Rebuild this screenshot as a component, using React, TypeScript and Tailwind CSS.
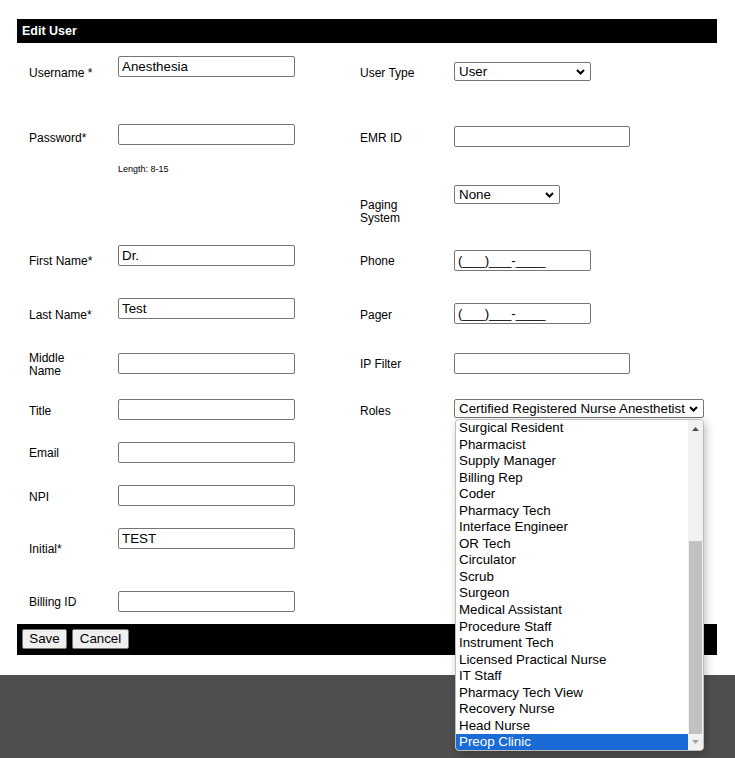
import React from 'react';

const roleOptions = [
  'Surgical Resident',
  'Pharmacist',
  'Supply Manager',
  'Billing Rep',
  'Coder',
  'Pharmacy Tech',
  'Interface Engineer',
  'OR Tech',
  'Circulator',
  'Scrub',
  'Surgeon',
  'Medical Assistant',
  'Procedure Staff',
  'Instrument Tech',
  'Licensed Practical Nurse',
  'IT Staff',
  'Pharmacy Tech View',
  'Recovery Nurse',
  'Head Nurse',
  'Preop Clinic',
];

const Chevron = () => (
  <svg width="9" height="6" viewBox="0 0 9 6" className="shrink-0">
    <path d="M1 1l3.5 3.5L8 1" fill="none" stroke="#000" strokeWidth="2" />
  </svg>
);

const TextInput = ({ value = '', className = 'w-[177px]' }: { value?: string; className?: string }) => (
  <input
    readOnly
    defaultValue={value}
    className={`block h-[21px] rounded-[2px] border border-[#767676] bg-white px-[3px] text-[13.33px] text-black outline-none ${className}`}
  />
);

const SelectBox = ({ value, className }: { value: string; className: string }) => (
  <div
    className={`flex h-[19px] items-center justify-between rounded-[2px] border border-[#767676] bg-white pl-[4px] pr-[5px] text-[13.33px] leading-[17px] text-black ${className}`}
  >
    <span className="whitespace-nowrap">{value}</span>
    <Chevron />
  </div>
);

const RolesDropdown = () => (
  <div className="absolute left-[1px] top-[20px] z-10 flex h-[332px] w-[249px] overflow-hidden rounded-[4px] border border-[#bdbdbd] bg-white shadow-[2px_3px_8px_rgba(0,0,0,0.25)]">
    <div className="flex-1">
      {roleOptions.map((role, i) => (
        <div
          key={role}
          className={`h-[16.55px] whitespace-nowrap pl-[3px] text-[13.33px] leading-[16.55px] ${
            i === roleOptions.length - 1 ? 'bg-[#1a6bd5] text-white' : 'text-black'
          }`}
        >
          {role}
        </div>
      ))}
    </div>
    {/* scrollbar */}
    <div className="flex w-[15px] flex-col bg-[#f1f1f1]">
      <div className="flex h-[17px] items-center justify-center">
        <svg width="7" height="4" viewBox="0 0 7 4">
          <polygon points="0,4 3.5,0 7,4" fill="#505050" />
        </svg>
      </div>
      <div className="flex-1" />
      <div className="mx-[1px] h-[193px] bg-[#c1c1c1]" />
      <div className="flex h-[16px] items-center justify-center">
        <svg width="7" height="4" viewBox="0 0 7 4">
          <polygon points="0,0 7,0 3.5,4" fill="#a3a3a3" />
        </svg>
      </div>
    </div>
  </div>
);

// labels sit a touch lower than the field tops, table-cell style
const Label = ({ children, className }: { children: React.ReactNode; className: string }) => (
  <div className={`mt-[1.5px] text-[12px] leading-[13px] text-black ${className}`}>{children}</div>
);

const rowCols = 'grid grid-cols-[89px_242px_94px_1fr]';

export default function App() {
  return (
    <div className="min-h-[758px] w-full bg-white pt-[19px] font-['Liberation_Sans',Arial,sans-serif]">
      <div className="ml-[17px] w-[700px]">
        {/* Header */}
        <div className="h-[24px] bg-black pl-[5px] text-[12.5px] font-bold leading-[24px] text-white">Edit User</div>

        <div className="pl-[12px]">
          {/* Username / User Type */}
          <div className={`${rowCols} h-[70px]`}>
            <Label className="pt-[22px]">Username *</Label>
            <div className="pt-[13px]"><TextInput value="Anesthesia" /></div>
            <Label className="pt-[22px]">User Type</Label>
            <div className="pt-[19px]"><SelectBox value="User" className="w-[137px]" /></div>
          </div>

          {/* Password / EMR ID */}
          <div className={`${rowCols} h-[43px]`}>
            <Label className="pt-[17px]">Password*</Label>
            <div className="pt-[11px]"><TextInput /></div>
            <Label className="pt-[17px]">EMR ID</Label>
            <div className="pt-[13px]"><TextInput className="w-[176px]" /></div>
          </div>

          {/* Length hint / Paging System */}
          <div className={`${rowCols} h-[79px]`}>
            <div />
            <div className="pt-[8px] text-[9px] leading-[10px] text-black">Length: 8-15</div>
            <Label className="pt-[41px]">Paging<br />System</Label>
            <div className="pt-[29px]"><SelectBox value="None" className="w-[106px]" /></div>
          </div>

          {/* First Name / Phone */}
          <div className={`${rowCols} h-[55px]`}>
            <Label className="pt-[18px]">First Name*</Label>
            <div className="pt-[10px]"><TextInput value="Dr." /></div>
            <Label className="pt-[18px]">Phone</Label>
            <div className="pt-[15px]"><TextInput value="(___)___-____" className="w-[137px]" /></div>
          </div>

          {/* Last Name / Pager */}
          <div className={`${rowCols} h-[50px]`}>
            <Label className="pt-[17px]">Last Name*</Label>
            <div className="pt-[8px]"><TextInput value="Test" /></div>
            <Label className="pt-[17px]">Pager</Label>
            <div className="pt-[13px]"><TextInput value="(___)___-____" className="w-[137px]" /></div>
          </div>

          {/* Middle Name / IP Filter */}
          <div className={`${rowCols} h-[50px]`}>
            <Label className="pt-[10px]">Middle<br />Name</Label>
            <div className="pt-[13px]"><TextInput /></div>
            <Label className="pt-[16px]">IP Filter</Label>
            <div className="pt-[13px]"><TextInput className="w-[176px]" /></div>
          </div>

          {/* Title / Roles */}
          <div className={`${rowCols} h-[40px]`}>
            <Label className="pt-[13px]">Title</Label>
            <div className="pt-[9px]"><TextInput /></div>
            <Label className="pt-[13px]">Roles</Label>
            <div className="pt-[9px]">
              <div className="relative w-[250px]">
                <SelectBox value="Certified Registered Nurse Anesthetist" className="w-[250px]" />
                <RolesDropdown />
              </div>
            </div>
          </div>

          {/* Email */}
          <div className={`${rowCols} h-[45px]`}>
            <Label className="pt-[15px]">Email</Label>
            <div className="pt-[12px]"><TextInput /></div>
          </div>

          {/* NPI */}
          <div className={`${rowCols} h-[40px]`}>
            <Label className="pt-[14px]">NPI</Label>
            <div className="pt-[10px]"><TextInput /></div>
          </div>

          {/* Initial */}
          <div className={`${rowCols} h-[60px]`}>
            <Label className="pt-[26px]">Initial*</Label>
            <div className="pt-[13px]"><TextInput value="TEST" /></div>
          </div>

          {/* Billing ID */}
          <div className={`${rowCols} h-[49px]`}>
            <Label className="pt-[19px]">Billing ID</Label>
            <div className="pt-[16px]"><TextInput /></div>
          </div>
        </div>

        {/* Footer actions */}
        <div className="flex h-[31px] gap-[5px] bg-black pl-[5px] pt-[5px]">
          <button className="h-[20px] w-[45px] rounded-[2px] border border-[#767676] bg-[#efefef] text-[13.33px] leading-[18px] text-black">
            Save
          </button>
          <button className="h-[20px] w-[57px] rounded-[2px] border border-[#767676] bg-[#efefef] text-[13.33px] leading-[18px] text-black">
            Cancel
          </button>
        </div>
      </div>

      <div className="mt-[20px] h-[83px] w-full bg-[#4f4f4f]" />
    </div>
  );
}
